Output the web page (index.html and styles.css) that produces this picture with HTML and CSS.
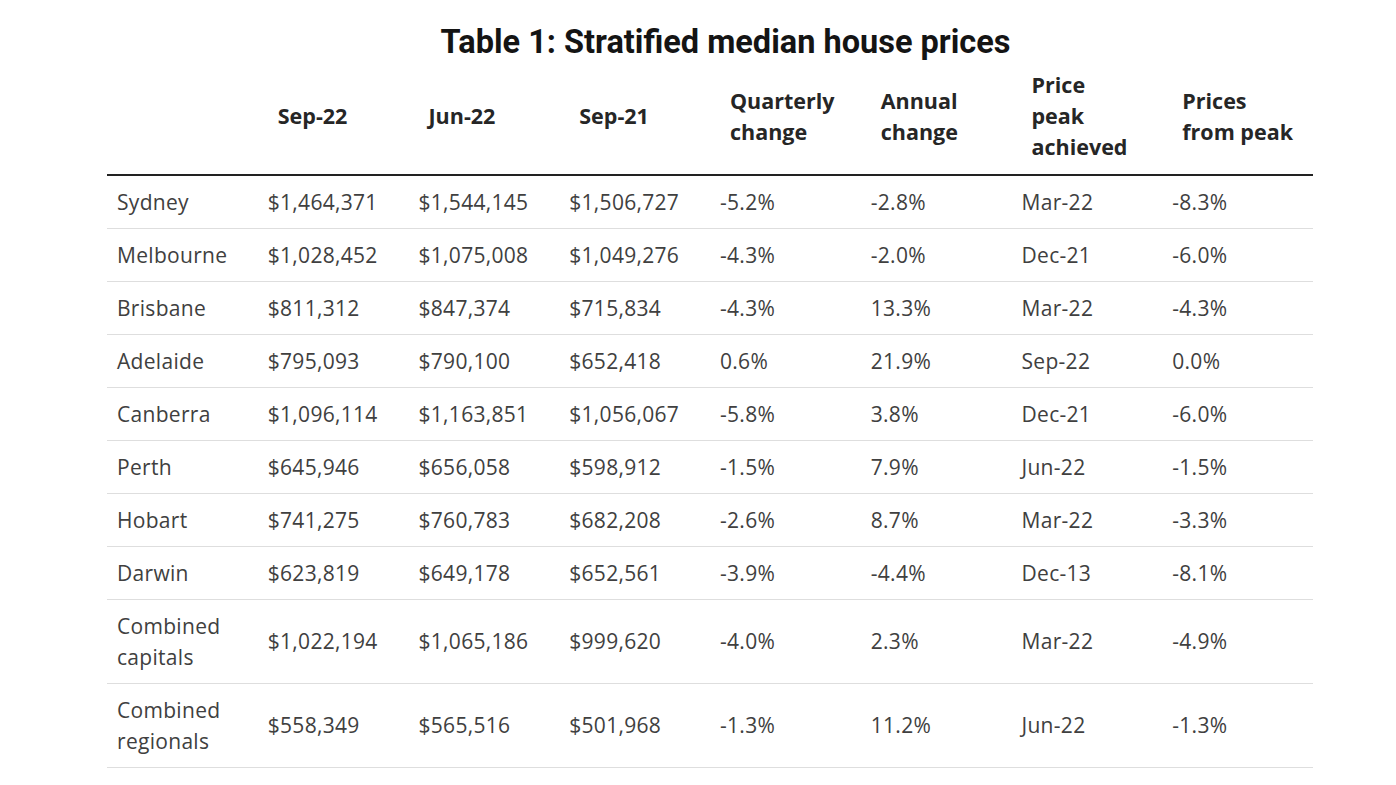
FILE: index.html
```html
<!DOCTYPE html>
<html lang="en">
<head>
<meta charset="utf-8">
<title>Table 1: Stratified median house prices</title>
<link rel="stylesheet" href="styles.css">
</head>
<body>
<div class="wrap">
  <h1 class="title">Table 1: Stratified median house prices</h1>
  <table class="prices">
    <colgroup>
      <col><col><col><col><col><col><col><col>
    </colgroup>
    <thead>
      <tr>
        <th></th>
        <th>Sep-22</th>
        <th>Jun-22</th>
        <th>Sep-21</th>
        <th>Quarterly<br>change</th>
        <th>Annual<br>change</th>
        <th>Price<br>peak<br>achieved</th>
        <th>Prices<br>from peak</th>
      </tr>
    </thead>
    <tbody>
      <tr><td>Sydney</td><td>$1,464,371</td><td>$1,544,145</td><td>$1,506,727</td><td>-5.2%</td><td>-2.8%</td><td>Mar-22</td><td>-8.3%</td></tr>
      <tr><td>Melbourne</td><td>$1,028,452</td><td>$1,075,008</td><td>$1,049,276</td><td>-4.3%</td><td>-2.0%</td><td>Dec-21</td><td>-6.0%</td></tr>
      <tr><td>Brisbane</td><td>$811,312</td><td>$847,374</td><td>$715,834</td><td>-4.3%</td><td>13.3%</td><td>Mar-22</td><td>-4.3%</td></tr>
      <tr><td>Adelaide</td><td>$795,093</td><td>$790,100</td><td>$652,418</td><td>0.6%</td><td>21.9%</td><td>Sep-22</td><td>0.0%</td></tr>
      <tr><td>Canberra</td><td>$1,096,114</td><td>$1,163,851</td><td>$1,056,067</td><td>-5.8%</td><td>3.8%</td><td>Dec-21</td><td>-6.0%</td></tr>
      <tr><td>Perth</td><td>$645,946</td><td>$656,058</td><td>$598,912</td><td>-1.5%</td><td>7.9%</td><td>Jun-22</td><td>-1.5%</td></tr>
      <tr><td>Hobart</td><td>$741,275</td><td>$760,783</td><td>$682,208</td><td>-2.6%</td><td>8.7%</td><td>Mar-22</td><td>-3.3%</td></tr>
      <tr><td>Darwin</td><td>$623,819</td><td>$649,178</td><td>$652,561</td><td>-3.9%</td><td>-4.4%</td><td>Dec-13</td><td>-8.1%</td></tr>
      <tr><td>Combined<br>capitals</td><td>$1,022,194</td><td>$1,065,186</td><td>$999,620</td><td>-4.0%</td><td>2.3%</td><td>Mar-22</td><td>-4.9%</td></tr>
      <tr><td>Combined<br>regionals</td><td>$558,349</td><td>$565,516</td><td>$501,968</td><td>-1.3%</td><td>11.2%</td><td>Jun-22</td><td>-1.3%</td></tr>
    </tbody>
  </table>
</div>
</body>
</html>
```

FILE: styles.css
```css
html, body {
  margin: 0;
  padding: 0;
  background: #ffffff;
}

.wrap {
  padding: 28px 0 0 107px;
}

.title {
  margin: 0;
  width: 1206px;
  padding-left: 31px;
  box-sizing: border-box;
  text-align: center;
  font-family: Roboto, "Liberation Sans", sans-serif;
  font-weight: 700;
  font-size: 32.5px;
  line-height: 29px;
  color: #141414;
  letter-spacing: 0;
}

.prices {
  width: 1206px;
  border-collapse: collapse;
  table-layout: fixed;
  font-family: "Open Sans", "Noto Sans", sans-serif;
}

.prices th {
  text-align: left;
  vertical-align: middle;
  font-weight: 700;
  font-size: 21.5px;
  line-height: 31px;
  color: #262626;
  padding: 12px 4px 12px 20px;
  border-bottom: 2px solid #222222;
}

.prices td {
  text-align: left;
  vertical-align: middle;
  font-weight: 400;
  font-size: 21px;
  letter-spacing: 0.3px;
  line-height: 31px;
  color: #404040;
  padding: 10.5px 4px 10.5px 10px;
  border-bottom: 1px solid #dedede;
}
```
